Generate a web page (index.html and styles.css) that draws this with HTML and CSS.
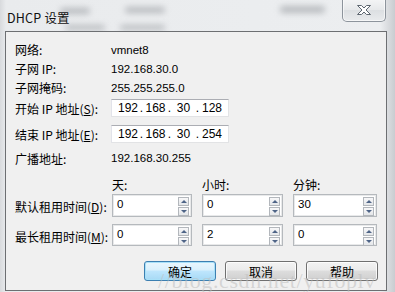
FILE: index.html
```html
<!DOCTYPE html>
<html>
<head>
<meta charset="utf-8">
<link rel="stylesheet" href="styles.css">
</head>
<body>
<div class="window">
  <div class="titlebar">
    <span class="blur b1"></span><span class="blur b2"></span><span class="blur b3"></span><span class="blur b4"></span><span class="blur b5"></span>
    <span class="title">DHCP 设置</span>
    <div class="close">
      <svg width="18" height="12" viewBox="0 0 18 12"><path d="M2.5 1.5 H6.5 L9 4 L11.5 1.5 H15.5 L11 6 L15.5 10.5 H11.5 L9 8 L6.5 10.5 H2.5 L7 6 Z" fill="#fff" stroke="#5d6670" stroke-width="1" stroke-linejoin="round"/></svg>
    </div>
  </div>
  <div class="panel">
    <div class="row r1"><span class="lbl">网络:</span><span class="val">vmnet8</span></div>
    <div class="row r2"><span class="lbl">子网 IP:</span><span class="val">192.168.30.0</span></div>
    <div class="row r3"><span class="lbl">子网掩码:</span><span class="val">255.255.255.0</span></div>
    <div class="row r4"><span class="lbl">开始 IP 地址(<u>S</u>):</span>
      <div class="ip"><span class="o1">192</span><span class="dot">.</span><span class="o2">168</span><span class="dot">.</span><span class="o3">30</span><span class="dot">.</span><span class="o4">128</span></div>
    </div>
    <div class="row r5"><span class="lbl">结束 IP 地址(<u>E</u>):</span>
      <div class="ip"><span class="o1">192</span><span class="dot">.</span><span class="o2">168</span><span class="dot">.</span><span class="o3">30</span><span class="dot">.</span><span class="o4">254</span></div>
    </div>
    <div class="row r6"><span class="lbl">广播地址:</span><span class="val">192.168.30.255</span></div>
    <div class="grid">
      <span></span><span class="hd">天:</span><span class="hd">小时:</span><span class="hd">分钟:</span>
      <span class="lbl">默认租用时间(<u>D</u>):</span>
      <div class="spin"><span class="num">0</span><div class="btns"><b class="up"></b><b class="dn"></b></div></div>
      <div class="spin"><span class="num">0</span><div class="btns"><b class="up"></b><b class="dn"></b></div></div>
      <div class="spin"><span class="num">30</span><div class="btns"><b class="up"></b><b class="dn"></b></div></div>
      <span class="lbl second">最长租用时间(<u>M</u>):</span>
      <div class="spin second"><span class="num">0</span><div class="btns"><b class="up"></b><b class="dn"></b></div></div>
      <div class="spin second"><span class="num">2</span><div class="btns"><b class="up"></b><b class="dn"></b></div></div>
      <div class="spin second"><span class="num">0</span><div class="btns"><b class="up"></b><b class="dn"></b></div></div>
    </div>
    <div class="buttons">
      <div class="btn default">确定</div>
      <div class="btn">取消</div>
      <div class="btn">帮助</div>
    </div>
    <div class="watermark">//blog.csdn.net/yufoplv</div>
  </div>
</div>
</body>
</html>
```
FILE: styles.css
```css
html, body { margin: 0; padding: 0; }
body { width: 395px; height: 292px; overflow: hidden; }
.window {
  width: 395px; height: 292px; box-sizing: border-box;
  background: linear-gradient(90deg, #d8dadd 0px, #e9ebed 6px, #eceef0 380px, #c9ccd0 395px);
  font-family: "Noto Sans CJK SC", "Noto Sans", sans-serif;
  color: #000;
  position: relative;
}
.titlebar { height: 31px; position: relative; display: flex; align-items: flex-start; }
.title { font-size: 12.5px; line-height: 14px; margin: 11px 0 0 7px; color: #111; position: relative; letter-spacing: 0.2px; }
.blur { position: absolute; background: #8d9196; filter: blur(3px); border-radius: 3px; opacity: .55; }
.b1 { left: 60px; top: 8px; width: 30px; height: 6px; }
.b2 { left: 125px; top: 7px; width: 40px; height: 6px; }
.b3 { left: 280px; top: 6px; width: 45px; height: 7px; }
.b4 { left: 65px; top: 25px; width: 40px; height: 5px; }
.b5 { left: 120px; top: 25px; width: 45px; height: 5px; }
.close {
  position: absolute; left: 342px; top: -1px; width: 44px; height: 23px; box-sizing: border-box;
  border: 1px solid #8d949c; border-top: none; border-radius: 0 0 5px 5px;
  background: linear-gradient(#f4f5f6, #e6e8ea 50%, #dcdfe2 51%, #e9ebed);
  display: flex; align-items: center; justify-content: center;
  box-shadow: inset 0 0 0 1px rgba(255,255,255,.6);
}
.panel {
  position: relative;
  margin-left: 5px; width: 382px; height: 260px; box-sizing: border-box;
  border: 1px solid #6d6f72; background: #f0f0f0;
  padding: 8px 0 0 9px;
  font-size: 12px;
}
.row { display: flex; align-items: center; height: 19px; }
.lbl { font-size: 12px; white-space: nowrap; }
.lbl u { text-decoration: underline; text-underline-offset: 1px; }
.row .lbl { width: 96px; }
.val { font-family: "Liberation Sans", sans-serif; font-size: 11.5px; }
.r4 { margin-top: 2px; height: 18px; }
.r5 { margin-top: 8px; height: 18px; }
.r6 { margin-top: 5px; height: 20px; }
.ip {
  width: 118px; height: 18px; box-sizing: border-box;
  background: #fff; border: 1px solid #e2e3e5; border-top-color: #abadb3; border-left-color: #e2e3ea;
  display: flex; align-items: center; font-family: "Liberation Sans", sans-serif; font-size: 12px;
}
.ip span { display: inline-block; }
.o1 { margin-left: 6px; width: 20px; }
.dot { width: 7px; text-align: center; }
.o2 { width: 21px; text-align: center; }
.o3 { width: 21px; text-align: center; }
.o4 { width: 21px; text-align: right; }
.grid {
  display: grid; grid-template-columns: 87px 80px 81px 84px; column-gap: 10px;
  grid-template-rows: 18px 23px 29px; row-gap: 0;
  margin-top: 8px;
}
.grid .hd { align-self: center; font-size: 12px; margin-top: -2px; }
.grid .lbl { align-self: center; padding-top: 2px; }
.grid .lbl.second { padding-top: 9px; }
.spin {
  box-sizing: border-box; border: 1px solid #b5b9bd; background: #fff;
  box-shadow: inset 0 0 0 1px #e8e9ea;
  display: flex; align-items: flex-start;
}
.spin.second { align-self: end; height: 22px; }
.num { font-family: "Liberation Sans", sans-serif; font-size: 11.5px; margin: 3px 0 0 4px; flex: 1; }
.btns { display: flex; flex-direction: column; gap: 1px; margin: 2px 2px 0 0; }
.btns b {
  display: block; width: 11px; height: 9px; box-sizing: border-box;
  border: 1px solid #b3b7bc; background: linear-gradient(#f8f8f9, #e4e6e9);
  position: relative;
}
.btns b::after {
  content: ""; position: absolute; left: 2px; width: 0; height: 0;
  border-left: 3px solid transparent; border-right: 3px solid transparent;
}
.btns .up::after { top: 2px; border-bottom: 3px solid #4e6487; }
.btns .dn::after { top: 2px; border-top: 3px solid #4e6487; }
.buttons { display: flex; justify-content: flex-end; gap: 9px; margin-top: 15px; padding-right: 8px; }
.btn {
  width: 72px; height: 20px; box-sizing: border-box;
  border: 1px solid #707070; border-radius: 3px;
  background: linear-gradient(#f3f3f3, #ebebeb 45%, #dddddd 50%, #cfcfcf);
  box-shadow: inset 0 0 0 1px rgba(255,255,255,.8);
  display: flex; align-items: center; justify-content: center; font-size: 12px;
}
.btn.default {
  border-color: #3c7fb1;
  background: linear-gradient(#eaf6fd, #d9f0fc 45%, #bee6fd 50%, #a7d9f5);
  box-shadow: inset 0 0 0 1px #a8e0f8;
}
.watermark {
  position: absolute; left: 152px; top: 236px;
  font-family: "Liberation Serif", serif; font-size: 22px; letter-spacing: 0.6px;
  color: rgba(190,190,190,.55); white-space: nowrap;
}
```
